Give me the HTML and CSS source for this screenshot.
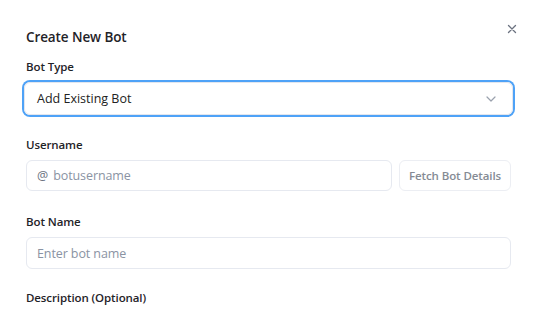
FILE: index.html
```html
<!DOCTYPE html>
<html>
<head>
<meta charset="utf-8">
<link rel="stylesheet" href="styles.css">
</head>
<body>
<div class="modal">
  <button class="close" aria-label="Close">
    <svg width="10" height="10" viewBox="0 0 10 10"><path d="M1.5 1.5 L8.5 8.5 M8.5 1.5 L1.5 8.5" stroke="#6b7280" stroke-width="1.3" stroke-linecap="round"/></svg>
  </button>
  <h2 class="title">Create New Bot</h2>
  <div class="label first">Bot Type</div>
  <div class="select">
    <span>Add Existing Bot</span>
    <svg class="chev" width="10" height="6" viewBox="0 0 10 6"><path d="M1 1 L5 5 L9 1" fill="none" stroke="#9aa1ad" stroke-width="1.2" stroke-linecap="round" stroke-linejoin="round"/></svg>
  </div>
  <div class="label">Username</div>
  <div class="row">
    <div class="input user"><span class="at">@</span><span class="ph">botusername</span></div>
    <button class="fetch">Fetch Bot Details</button>
  </div>
  <div class="label name-label">Bot Name</div>
  <div class="input name"><span class="ph">Enter bot name</span></div>
  <div class="label desc">Description (Optional)</div>
</div>
</body>
</html>
```
FILE: styles.css
```css
* { box-sizing: border-box; }
html, body { margin: 0; background: #fff; }
body { font-family: "Open Sans", "Noto Sans", sans-serif; color: #1f2328; }
.modal { position: relative; padding: 27px 27px 0 26px; }
.close { position: absolute; top: 24px; right: 21px; width: 10px; height: 10px; padding: 0; border: 0; background: none; display: flex; }
.title { margin: 0; font-size: 13.5px; line-height: 20px; font-weight: 600; color: #1f2328; letter-spacing: -0.1px; }
.label { font-size: 11.5px; line-height: 16px; font-weight: 600; color: #1f2328; margin-top: 22px; letter-spacing: -0.1px; }
.label.first { margin-top: 12px; }
.label.name-label { margin-top: 23px; }
.label.desc { margin-top: 21px; }
.select { margin: 7px -2px 0 -2px; height: 33px; border: 1px solid #e2e6ee; border-radius: 6px; box-shadow: 0 0 0 2px #4ea2f7; display: flex; align-items: center; justify-content: space-between; padding: 0 16px 0 12px; font-size: 12.5px; color: #222; }
.chev { display: block; }
.row { display: flex; gap: 7px; margin-top: 7px; }
.input { height: 31px; border: 1px solid #e6e9f0; border-radius: 6px; display: flex; align-items: center; padding: 0 10px; font-size: 12.5px; }
.input.user { flex: 1; }
.input.name { margin-top: 7px; height: 32px; }
.at { color: #6b7280; margin-right: 5px; }
.ph { color: #8a93a3; letter-spacing: -0.1px; }
.fetch { width: 112px; height: 31px; border: 1px solid #eceef3; border-radius: 6px; background: #fff; font-family: inherit; font-size: 11.5px; font-weight: 600; color: #858b94; padding: 0; letter-spacing: -0.1px; }
```
